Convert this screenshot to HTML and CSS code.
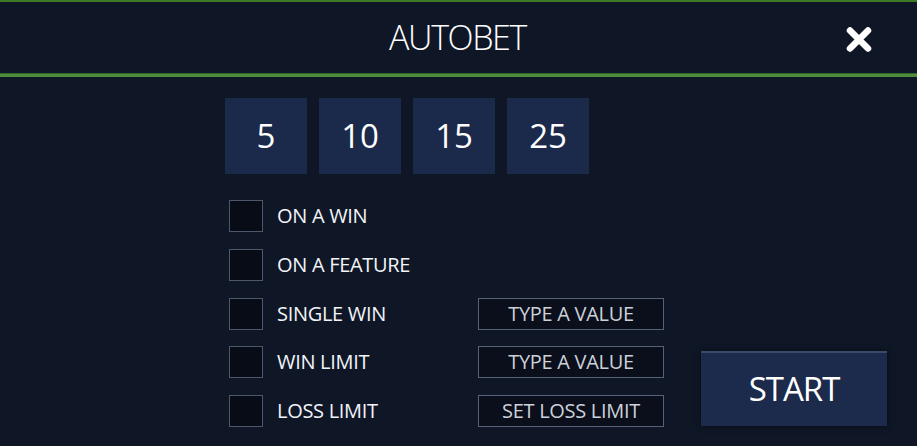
FILE: index.html
```html
<!DOCTYPE html>
<html lang="en">
<head>
<meta charset="utf-8">
<title>Autobet</title>
<link rel="stylesheet" href="styles.css">
</head>
<body>
<div class="panel">
  <header class="header">
    <h1 class="title">AUTOBET</h1>
    <button class="close" aria-label="Close">
      <svg width="28" height="27" viewBox="0 0 28 27">
        <path d="M5 4.5 L23 22.5 M23 4.5 L5 22.5" stroke="#ffffff" stroke-width="6.5" stroke-linecap="round" fill="none"/>
      </svg>
    </button>
  </header>
  <main class="body">
    <div class="left">
      <div class="counts">
        <button class="count">5</button>
        <button class="count">10</button>
        <button class="count">15</button>
        <button class="count">25</button>
      </div>
      <div class="options">
        <span class="check"></span><span class="label">ON A WIN</span><span></span>
        <span class="check"></span><span class="label">ON A FEATURE</span><span></span>
        <span class="check"></span><span class="label">SINGLE WIN</span><span class="field">TYPE A VALUE</span>
        <span class="check"></span><span class="label">WIN LIMIT</span><span class="field">TYPE A VALUE</span>
        <span class="check"></span><span class="label">LOSS LIMIT</span><span class="field">SET LOSS LIMIT</span>
      </div>
    </div>
    <button class="start">START</button>
  </main>
</div>
</body>
</html>
```
FILE: styles.css
```css
* { box-sizing: border-box; }
html, body {
  margin: 0;
  padding: 0;
  background: #0f1727;
  width: 917px;
  height: 446px;
  overflow: hidden;
  font-family: "Open Sans", "Noto Sans", sans-serif;
  color: #ffffff;
}
.panel {
  width: 917px;
  height: 446px;
  display: flex;
  flex-direction: column;
}
.header {
  height: 78px;
  border-top: 2px solid #3d7b24;
  border-bottom: 3px solid #4f8c3c;
  box-shadow: inset 0 -1px 0 #33682a;
  display: flex;
  align-items: center;
  justify-content: center;
  position: relative;
}
.title {
  margin: 0;
  font-weight: 300;
  font-size: 34px;
  letter-spacing: -1.4px;
  line-height: 1;
  color: #ffffff;
  transform: translate(-1px, -1px);
}
.close {
  position: absolute;
  right: 44px;
  top: 24px;
  width: 28px;
  height: 27px;
  padding: 0;
  border: 0;
  background: transparent;
  display: flex;
}
.body {
  flex: 1;
  display: flex;
  align-items: flex-end;
  padding: 21px 30px 19px 225px;
  gap: 37px;
}
.left {
  display: flex;
  flex-direction: column;
  gap: 26px;
}
.counts {
  display: flex;
  gap: 12px;
}
.count {
  width: 82px;
  height: 76px;
  border: 0;
  padding: 0 0 2px;
  background: #1b2a4b;
  color: #ffffff;
  font-family: "Open Sans", "Noto Sans", sans-serif;
  font-size: 33px;
  font-weight: 400;
}
.options {
  display: grid;
  grid-template-columns: 34px 187px 186px;
  column-gap: 14px;
  row-gap: 16.75px;
  padding-left: 4px;
}
.check {
  width: 34px;
  height: 32px;
  background: #080c17;
  border: 1px solid #4d586d;
}
.label {
  display: flex;
  align-items: center;
  height: 32px;
  font-size: 20px;
  letter-spacing: -0.3px;
  color: #f2f4f7;
  padding-bottom: 1px;
}
.field {
  height: 32px;
  display: flex;
  align-items: center;
  justify-content: center;
  background: #0a0f1b;
  border: 1px solid #56627a;
  font-size: 20px;
  letter-spacing: -0.3px;
  color: #cdd1d9;
  padding-bottom: 1px;
}
.start {
  width: 186px;
  height: 75px;
  margin-bottom: 1px;
  border: 0;
  border-top: 2px solid #3a4a6b;
  background: #1c2a4b;
  box-shadow: 0 0 6px rgba(0, 0, 0, 0.6);
  color: #ffffff;
  font-family: "Open Sans", "Noto Sans", sans-serif;
  font-size: 33px;
  letter-spacing: -1px;
  padding: 0 0 2px;
}
```
